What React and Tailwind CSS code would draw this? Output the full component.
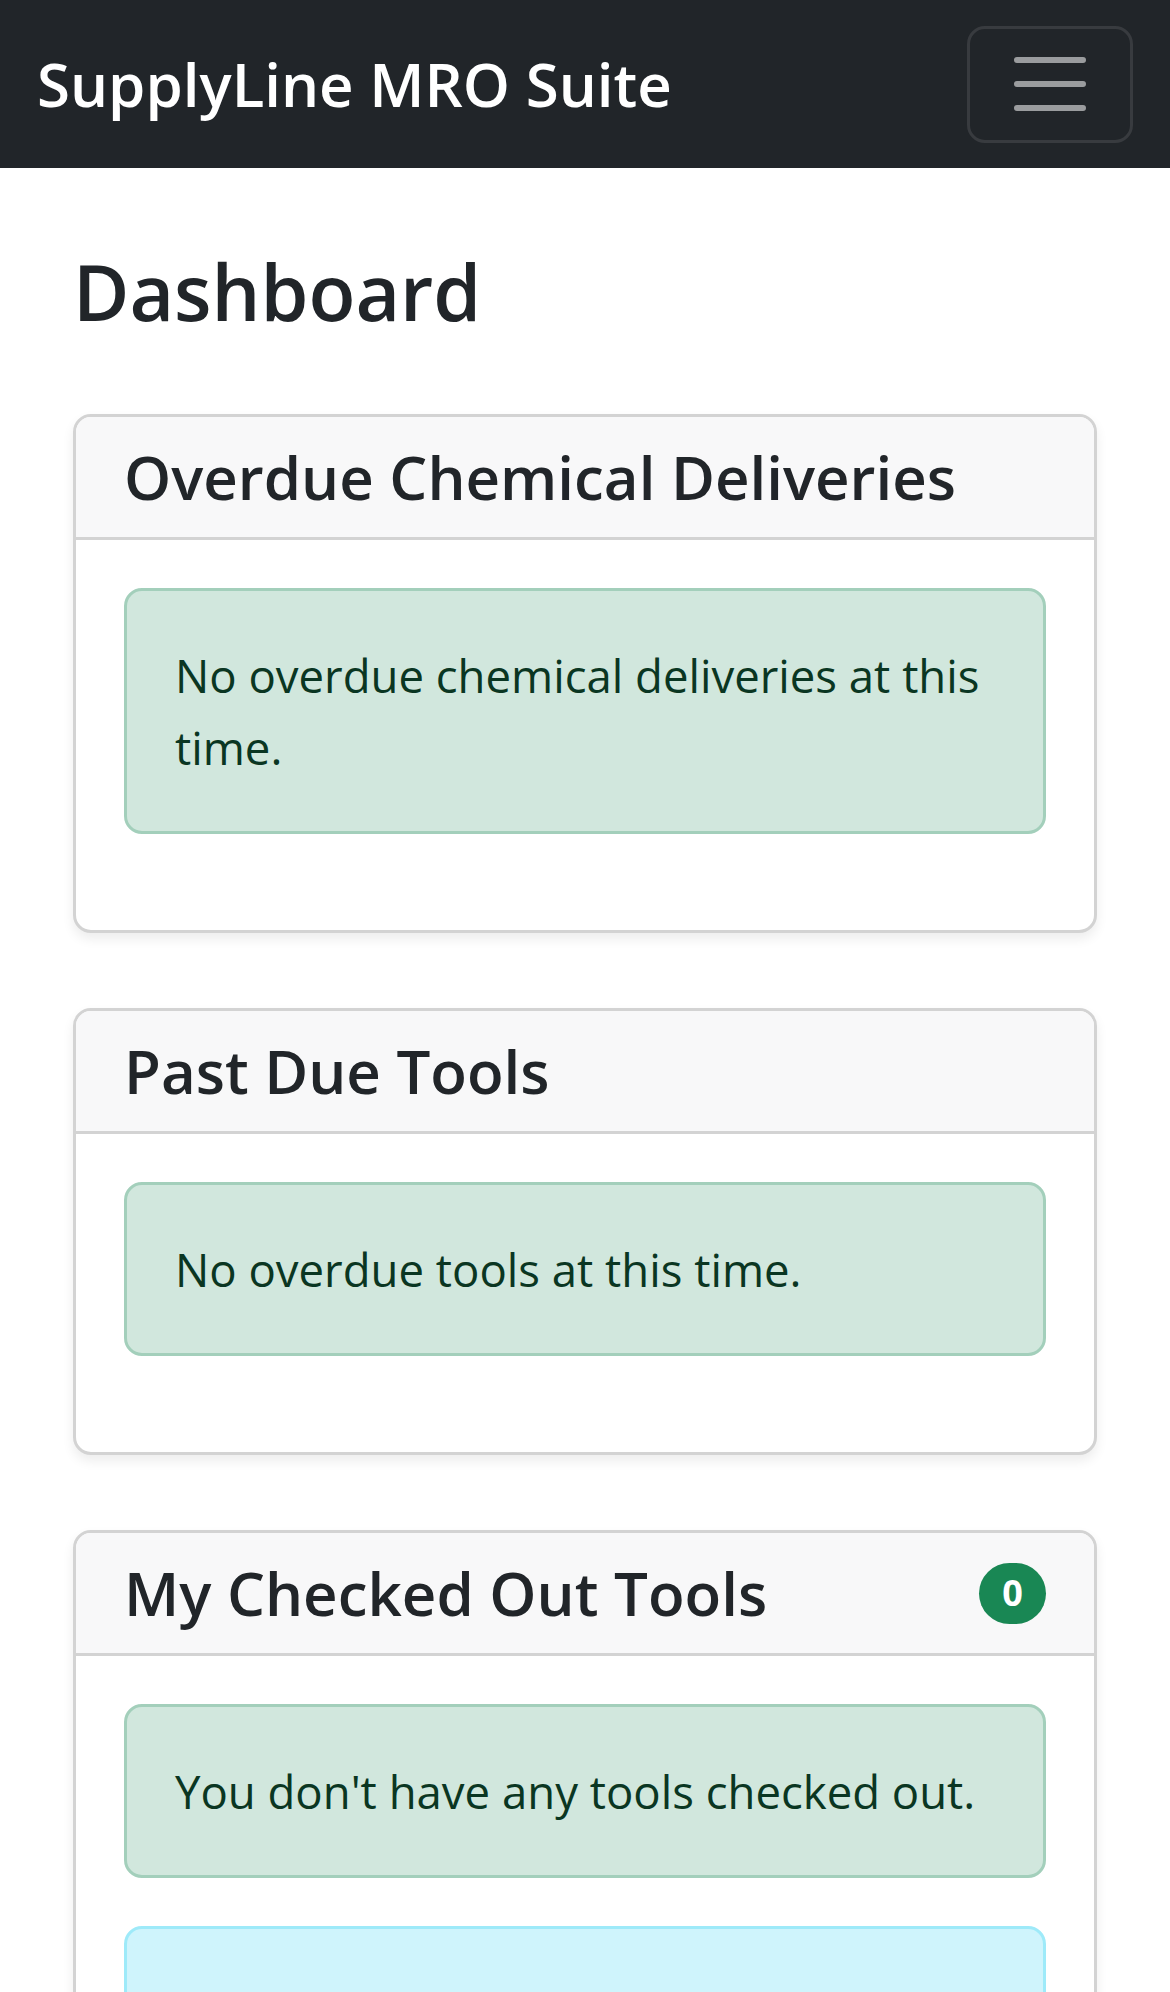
// Dashboard screen, mobile layout photographed at 3x (all sizes are 3x CSS px)

function Card({ title, badge, children }) {
  return (
    <div className="mb-[75px] overflow-hidden rounded-[18px] border-[3px] border-[#d3d3d3] bg-white shadow-[0_6px_12px_rgba(0,0,0,0.075)]">
      <div className="flex items-center justify-between border-b-[3px] border-[#d3d3d3] bg-[#f8f8f9] px-[48px] py-[24px]">
        <h5 className="text-[60px] font-semibold leading-[72px] text-[#212529]">{title}</h5>
        {badge !== undefined && (
          <span className="flex h-[61px] min-w-[67px] items-center justify-center rounded-full bg-[#198754] px-[23px] text-[36px] font-bold leading-none text-white">
            {badge}
          </span>
        )}
      </div>
      <div className="p-[48px]">{children}</div>
    </div>
  );
}

function Alert({ variant = 'success', children }) {
  const styles =
    variant === 'info'
      ? 'border-[#9eeaf9] bg-[#cff4fc] text-[#055160]'
      : 'border-[#a3cfbb] bg-[#d1e7dd] text-[#0a3622]';
  return (
    <div className={`mb-[48px] rounded-[18px] border-[3px] p-[48px] text-[45.5px] leading-[72px] ${styles}`}>
      {children}
    </div>
  );
}

export default function App() {
  return (
    <div className="min-h-screen bg-white font-['Open_Sans','Noto_Sans',sans-serif] text-[#212529]">
      <nav className="flex h-[168px] items-center justify-between bg-[#212529] px-[37px]">
        <span className="text-[60px] font-semibold leading-[90px] text-white">SupplyLine MRO Suite</span>
        <button className="flex h-[117px] w-[166px] items-center justify-center rounded-[18px] border-[3px] border-[#383b3f]">
          <svg width="90" height="90" viewBox="0 0 30 30" fill="none">
            <path
              d="M4 7h22M4 15h22M4 23h22"
              stroke="rgba(255,255,255,0.55)"
              strokeWidth="2"
              strokeLinecap="round"
            />
          </svg>
        </button>
      </nav>

      <main className="px-[73px] pt-[74px]">
        <h1 className="mb-[72px] text-[77px] font-semibold leading-[100px]">Dashboard</h1>

        <Card title="Overdue Chemical Deliveries">
          <Alert>No overdue chemical deliveries at this time.</Alert>
        </Card>

        <Card title="Past Due Tools">
          <Alert>No overdue tools at this time.</Alert>
        </Card>

        <Card title="My Checked Out Tools" badge={0}>
          <Alert>You don't have any tools checked out.</Alert>
          <Alert variant="info">Visit the Tools page to check out a tool.</Alert>
        </Card>
      </main>
    </div>
  );
}
